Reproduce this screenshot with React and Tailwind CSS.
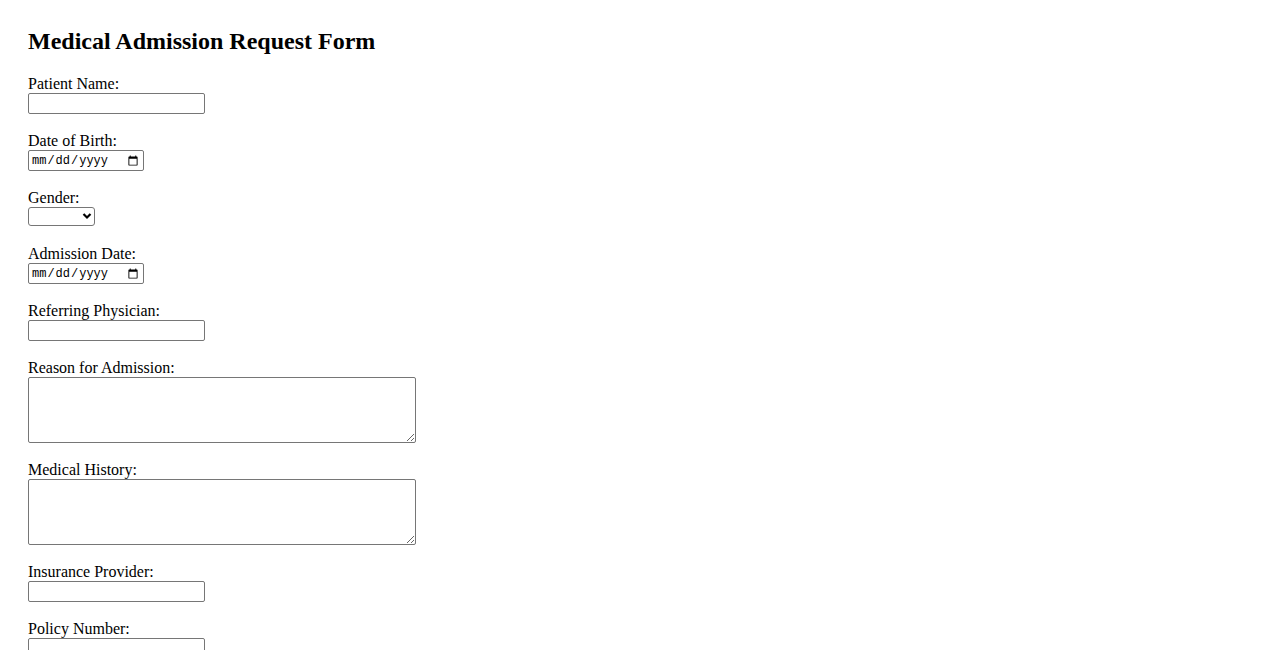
import React from "react";

const labelCls = "block h-[18px] leading-[18px] text-[16px]";
const inputCls =
  "block w-[177px] h-[21px] border border-[#767676] rounded-[2px] bg-white px-[2px] py-[1px] text-[13.33px] font-['Liberation_Sans',sans-serif] outline-none";
const dateCls =
  "block w-[116px] h-[21px] border border-[#767676] rounded-[2px] bg-white px-[2px] py-[1px] text-[12px] font-['Liberation_Mono',monospace] text-black outline-none";
const areaCls =
  "block w-[388px] h-[66px] border border-[#767676] rounded-[2px] bg-white px-[2px] py-[2px] text-[13.33px] font-['Liberation_Mono',monospace] outline-none";

function Field({ label, children }) {
  return (
    <div className="mb-[18px]">
      <label className={labelCls}>{label}</label>
      {children}
    </div>
  );
}

export default function App() {
  return (
    <div className="min-h-screen bg-white text-black font-['Liberation_Serif',serif] pl-[28px] pt-[27px]">
      <h2 className="text-[24px] font-bold leading-[28px] h-[28px] mb-[20px]">
        Medical Admission Request Form
      </h2>
      <form>
        <Field label="Patient Name:">
          <input type="text" className={inputCls} />
        </Field>
        <Field label="Date of Birth:">
          <input type="date" className={dateCls} />
        </Field>
        <Field label="Gender:">
          <div className="relative w-[67px] h-[20px]">
            <select className="block w-[67px] h-[19px] appearance-none border border-[#767676] rounded-[3px] bg-white text-[13.33px] font-['Liberation_Sans',sans-serif] outline-none">
              <option value=""></option>
              <option>Male</option>
              <option>Female</option>
              <option>Other</option>
            </select>
            <svg
              className="absolute right-[3px] top-[4px] pointer-events-none"
              width="10"
              height="10"
              viewBox="0 0 10 10"
            >
              <path d="M1.5 3 L5 6.5 L8.5 3" fill="none" stroke="#000" strokeWidth="2.2" />
            </svg>
          </div>
        </Field>
        <Field label="Admission Date:">
          <input type="date" className={dateCls} />
        </Field>
        <Field label="Referring Physician:">
          <input type="text" className={inputCls} />
        </Field>
        <Field label="Reason for Admission:">
          <textarea className={areaCls} />
        </Field>
        <Field label="Medical History:">
          <textarea className={areaCls} />
        </Field>
        <Field label="Insurance Provider:">
          <input type="text" className={inputCls} />
        </Field>
        <Field label="Policy Number:">
          <input type="text" className={inputCls} />
        </Field>
      </form>
    </div>
  );
}
